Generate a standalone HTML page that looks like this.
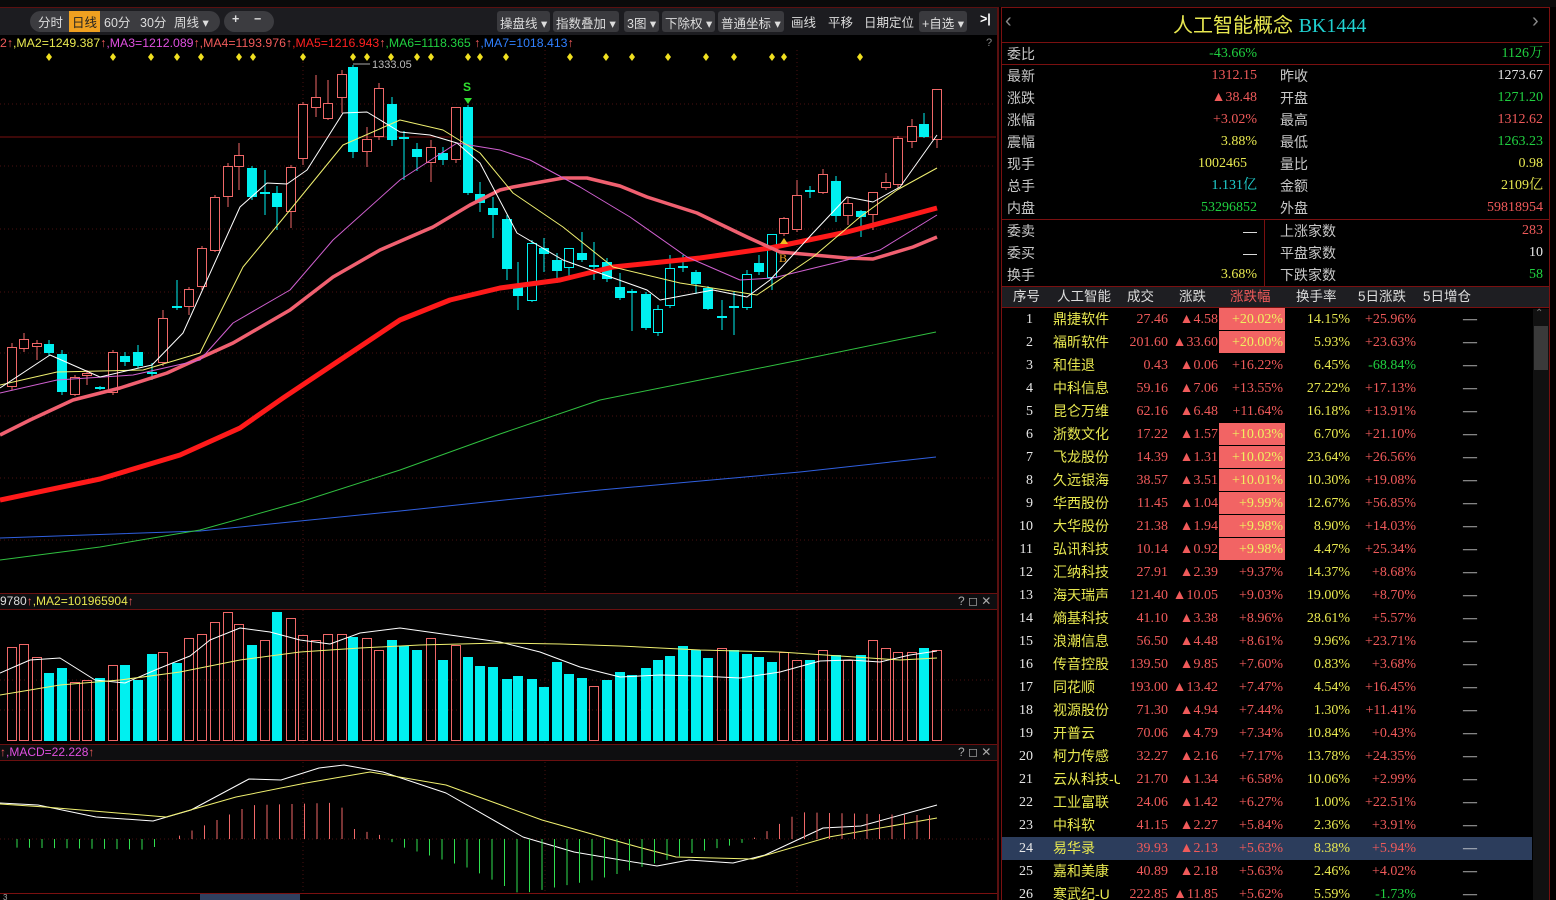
<!DOCTYPE html>
<html><head><meta charset="utf-8">
<style>
*{margin:0;padding:0;box-sizing:border-box}
html,body{width:1556px;height:900px;overflow:hidden}
body{background:#000;position:relative;font-family:"Liberation Sans","Noto Sans CJK SC",sans-serif;color:#ccc;font-size:13px}
.abs{position:absolute}
.tb{left:0;top:7px;width:998px;height:28px;background:#1c1c20;border-top:1px solid #5a1010}
.pill{position:absolute;top:3px;height:21px;background:#3c3c40;border-radius:11px}
.btn{position:absolute;top:4px;font-size:12.5px;color:#ddd;white-space:nowrap}
.bt2{position:absolute;top:3px;height:21px;background:#3a3a3e;border-radius:3px;font-size:12.5px;color:#ddd;padding:2px 3px;white-space:nowrap}
.ma{left:0;top:36px;font-size:12.3px;white-space:nowrap}
.hdr{left:0;width:997px;height:17px;background:#0e0e10;border-top:1px solid #6a1010;border-bottom:1px solid #6a1010;font-size:12px;line-height:15px;white-space:nowrap}
.rp{left:1001px;top:7px;width:549px;height:893px;border:1px solid #7a1010;border-bottom:none}
.ser{font-family:"Liberation Serif","Noto Serif CJK SC",serif}
.r{color:#f05a5a}.g{color:#20d040}.y{color:#e8e850}.c{color:#20d0d0}.w{color:#e8e8e8}.l{color:#c8c8c8}
.row{position:absolute;left:0;width:547px;height:22px;font-size:14px}
.row span{position:absolute;top:0;line-height:22px;white-space:nowrap}
.tr{position:absolute;left:0;width:530px;height:23px;font-size:14px}
.tr span{position:absolute;top:0;line-height:23px;white-space:nowrap}
</style></head><body>
<div class="abs" style="left:0;top:0;width:1556px;height:7px;background:#0a0a0a"></div>
<div class="abs tb">
 <div class="pill" style="left:30px;width:190px"></div>
 <div class="abs" style="left:69px;top:3px;width:31px;height:21px;background:#f0a020"></div>
 <span class="btn" style="left:38px">分时</span><span class="btn" style="left:72px;color:#222">日线</span><span class="btn" style="left:104px">60分</span><span class="btn" style="left:140px">30分</span><span class="btn" style="left:174px">周线 ▾</span>
 <div class="pill" style="left:224px;width:50px"></div>
 <span class="btn" style="left:232px;font-weight:bold">+</span><span class="btn" style="left:254px;font-weight:bold">−</span>
 <span class="bt2" style="left:497px">操盘线 ▾</span><span class="bt2" style="left:553px">指数叠加 ▾</span><span class="bt2" style="left:624px">3图 ▾</span><span class="bt2" style="left:662px">下除权 ▾</span><span class="bt2" style="left:718px">普通坐标 ▾</span>
 <span class="btn" style="left:791px">画线</span><span class="btn" style="left:828px">平移</span><span class="btn" style="left:864px">日期定位</span><span class="bt2" style="left:919px">+自选 ▾</span>
 <span class="btn" style="left:980px;font-weight:bold;color:#fff">&gt;|</span>
</div>
<div class="abs ma"><span class="r">2↑</span><span class="y">,MA2=1249.387</span><span class="r">↑</span><span style="color:#e050e0">,MA3=1212.089</span><span class="r">↑</span><span class="r">,MA4=1193.976↑</span><span style="color:#ff2020">,MA5=1216.943</span><span class="r">↑</span><span class="g">,MA6=1118.365</span><span class="r"> ↑</span><span style="color:#3080ff">,MA7=1018.413</span><span class="r">↑</span></div>
<span class="abs" style="left:986px;top:37px;font-size:11px;color:#888">?</span>
<svg class="abs" style="left:0;top:0" width="998" height="900" id="sv"></svg>
<div class="abs hdr" style="top:593px"><span style="color:#ddd">9780</span><span class="r">↑</span><span class="y">,MA2=101965904</span><span class="r">↑</span><span style="position:absolute;left:958px;color:#aaa">? ◻ ✕</span></div>
<div class="abs hdr" style="top:744px"><span class="r">↑</span><span style="color:#e050e0">,MACD=22.228</span><span class="r">↑</span><span style="position:absolute;left:958px;color:#aaa">? ◻ ✕</span></div>
<div class="abs" style="left:0;top:893px;width:998px;height:7px;border-top:1px solid #7a1010"></div>
<div class="abs" style="left:200px;top:894px;width:100px;height:6px;background:#304060"></div>
<div class="abs" style="left:997px;top:7px;width:2px;height:893px;background:#5a1010"></div>

<div class="abs rp">
 <div class="abs" style="left:0;top:0;width:547px;height:35px;border-bottom:1px solid #7a1010">
  <span class="abs" style="left:3px;top:2px;font-size:20px;color:#888">‹</span>
  <span class="abs" style="left:171px;top:1px;font-size:20px;color:#e8e850">人工智能概念 <span class="ser c">BK1444</span></span>
  <span class="abs" style="left:530px;top:2px;font-size:20px;color:#888">›</span>
 </div>
 <div class="row" style="top:35px;border-bottom:1px solid #7a1010"><span class="l" style="left:5px">委比</span><span class="ser g" style="right:292px">-43.66%</span><span class="ser g" style="right:6px">1126万</span></div>
 <div class="row" style="top:57px"><span class="l" style="left:5px">最新</span><span class="ser r" style="right:292px">1312.15</span><span class="l" style="left:278px">昨收</span><span class="ser w" style="right:6px">1273.67</span></div>
 <div class="row" style="top:79px"><span class="l" style="left:5px">涨跌</span><span class="ser r" style="right:292px">▲38.48</span><span class="l" style="left:278px">开盘</span><span class="ser g" style="right:6px">1271.20</span></div>
 <div class="row" style="top:101px"><span class="l" style="left:5px">涨幅</span><span class="ser r" style="right:292px">+3.02%</span><span class="l" style="left:278px">最高</span><span class="ser r" style="right:6px">1312.62</span></div>
 <div class="row" style="top:123px"><span class="l" style="left:5px">震幅</span><span class="ser y" style="right:292px">3.88%</span><span class="l" style="left:278px">最低</span><span class="ser g" style="right:6px">1263.23</span></div>
 <div class="row" style="top:145px"><span class="l" style="left:5px">现手</span><span class="ser y" style="right:302px">1002465</span><span class="l" style="left:278px">量比</span><span class="ser y" style="right:6px">0.98</span></div>
 <div class="row" style="top:167px"><span class="l" style="left:5px">总手</span><span class="ser c" style="right:292px">1.131亿</span><span class="l" style="left:278px">金额</span><span class="ser y" style="right:6px">2109亿</span></div>
 <div class="row" style="top:189px;border-bottom:1px solid #7a1010;height:23px"><span class="l" style="left:5px">内盘</span><span class="ser g" style="right:292px">53296852</span><span class="l" style="left:278px">外盘</span><span class="ser r" style="right:6px">59818954</span></div>
 <div class="abs" style="left:262px;top:212px;width:1px;height:66px;background:#7a1010"></div>
 <div class="row" style="top:212px"><span class="l" style="left:5px">委卖</span><span class="w" style="right:292px">—</span><span class="l" style="left:278px">上涨家数</span><span class="ser r" style="right:6px">283</span></div>
 <div class="row" style="top:234px"><span class="l" style="left:5px">委买</span><span class="w" style="right:292px">—</span><span class="l" style="left:278px">平盘家数</span><span class="ser w" style="right:6px">10</span></div>
 <div class="row" style="top:256px"><span class="l" style="left:5px">换手</span><span class="ser y" style="right:292px">3.68%</span><span class="l" style="left:278px">下跌家数</span><span class="ser g" style="right:6px">58</span></div>
 <div class="abs" style="left:0;top:278px;width:547px;height:22px;background:#1e1e22;border-top:1px solid #7a1010;border-bottom:1px solid #7a1010;font-size:13.5px;color:#ddd;line-height:20px">
  <span class="abs" style="left:11px;top:0">序号</span><span class="abs" style="left:55px;top:0">人工智能</span><span class="abs" style="left:125px;top:0">成交</span><span class="abs" style="left:177px;top:0">涨跌</span><span class="abs r" style="left:228px;top:0">涨跌幅</span><span class="abs" style="left:294px;top:0">换手率</span><span class="abs" style="left:356px;top:0">5日涨跌</span><span class="abs" style="left:421px;top:0">5日增仓</span>
 </div>
 <div class="abs" style="left:531px;top:301px;width:16px;height:592px;background:#111"></div>
 <div class="abs" style="left:532px;top:318px;width:14px;height:44px;background:#3a3a3a"></div>
 <span class="abs" style="left:533px;top:300px;font-size:10px;color:#777">⌃</span>
 <div id="tbl" class="abs" style="left:0;top:300px"></div>
</div>

<script>
var NS="http://www.w3.org/2000/svg",sv=document.getElementById('sv');
function el(t,a){var e=document.createElementNS(NS,t);for(var k in a)e.setAttribute(k,a[k]);sv.appendChild(e);return e}
[104,166,229,292,353,416,478,540].forEach(function(y){el('line',{x1:0,x2:996,y1:y,y2:y,stroke:'#4a1010','stroke-dasharray':'1 3'})});
[680,710].forEach(function(y){el('line',{x1:0,x2:996,y1:y,y2:y,stroke:'#4a1010','stroke-dasharray':'1 3'})});
[303,545,797].forEach(function(x){el('line',{x1:x,x2:x,y1:50,y2:893,stroke:'#4a1010','stroke-dasharray':'1 3'})});
el('line',{x1:0,x2:996,y1:137,y2:137,stroke:'#7a1010'});
el('line',{x1:0,x2:996,y1:839,y2:839,stroke:'#4a1010','stroke-dasharray':'1 3'});
[49,113,151,177,201,239,253,303,353,367,391,417,431,468,480,506,570,606,632,668,706,734,772,784,860].forEach(function(x){el('polygon',{points:(x)+',53 '+(x+3)+',57 '+x+',61 '+(x-3)+',57',fill:'#f0e020'})});
var C=[[12,347,387,343,390,'r'],[24,339,349,333,352,'r'],[37,343,347,340,360,'r'],[49,344,353,340,356,'c'],[62,354,392,350,395,'c'],[75,377,395,375,396,'r'],[87,373,376,370,385,'r'],[100,387,389,386,390,'c'],[113,352,393,350,395,'r'],[125,356,362,352,366,'c'],[138,352,366,345,368,'c'],[152,372,374,363,380,'d'],[163,318,363,310,366,'r'],[177,306,308,280,310,'d'],[189,289,307,287,315,'r'],[202,248,287,246,290,'r'],[215,197,251,195,252,'r'],[228,166,197,163,207,'r'],[239,155,167,143,190,'r'],[252,168,197,166,200,'c'],[265,192,196,170,215,'d'],[277,193,207,186,230,'c'],[291,167,212,165,228,'r'],[303,104,159,102,165,'r'],[316,97,108,75,117,'r'],[328,103,119,80,120,'r'],[342,74,98,70,113,'r'],[353,67,152,65,158,'c'],[367,139,152,127,167,'r'],[379,88,137,83,140,'r'],[392,104,140,97,146,'c'],[404,137,139,131,180,'d'],[417,149,157,143,171,'c'],[431,147,163,140,182,'r'],[443,153,160,147,165,'c'],[456,107,160,107,163,'r'],[468,107,193,105,195,'c'],[480,194,203,182,212,'c'],[493,208,215,197,238,'c'],[507,219,269,215,280,'c'],[518,286,296,262,310,'c'],[532,243,301,240,302,'o'],[544,248,254,238,272,'c'],[557,260,271,253,283,'c'],[569,248,268,248,278,'o'],[582,253,260,232,262,'c'],[594,265,267,242,280,'d'],[607,262,279,258,282,'c'],[620,287,298,273,300,'c'],[632,291,293,289,331,'d'],[646,294,328,292,330,'c'],[658,309,333,305,336,'o'],[670,268,306,255,308,'o'],[683,266,268,255,272,'d'],[696,272,284,270,294,'c'],[708,288,309,286,310,'c'],[722,316,318,300,330,'d'],[734,306,308,292,335,'c'],[747,274,308,270,310,'o'],[759,263,272,255,275,'c'],[772,234,278,234,290,'o'],[784,218,234,217,236,'r'],[797,195,230,180,232,'r'],[810,190,192,186,198,'d'],[823,174,193,169,194,'r'],[836,181,216,176,222,'c'],[848,203,216,197,225,'r'],[861,211,217,210,237,'c'],[873,192,215,192,230,'r'],[886,182,188,173,190,'r'],[898,138,185,136,188,'r'],[912,126,142,119,148,'r'],[924,124,137,113,138,'c'],[937,89,140,89,148,'r']];
C.forEach(function(k){var x=k[0],col=(k[5]=='r')?'#f06868':'#00f0f0';
 el('line',{x1:x,x2:x,y1:k[3],y2:k[4],stroke:col});
 if(k[5]=='d'){el('line',{x1:x-5,x2:x+5,y1:k[1]+1,y2:k[1]+1,stroke:col,'stroke-width':2})}
 else if(k[5]=='c'){el('rect',{x:x-5,y:k[1],width:10,height:Math.max(2,k[2]-k[1]),fill:col})}
 else{el('rect',{x:x-4.5,y:k[1]+.5,width:9,height:Math.max(2,k[2]-k[1]-1),fill:'#000',stroke:col})}
});
function pl(p,c,w){el('polyline',{points:p,fill:'none',stroke:c,'stroke-width':w||1,'stroke-linejoin':'round'})}
pl('0,538 200,531 400,511 600,490 800,472 936,457','#3060e0');
pl('0,560 100,547 200,530 300,502 400,470 500,434 600,400 700,380 800,360 936,332','#30c040');
pl('0,500 100,479 180,455 240,428 283,398 340,360 400,320 450,300 500,288 560,280 613,267 700,258 770,248 847,232 900,218 937,208','#ff1a1a',5);
pl('0,435 30,420 73,400 120,388 167,373 233,343 290,310 333,277 380,250 433,227 470,205 500,190 513,187 563,178 587,178 620,186 647,197 697,213 747,237 780,252 847,258 873,259 913,247 937,237','#f06070',3.5);
pl('0,393 57,380 133,375 200,360 233,323 290,290 333,240 400,180 457,143 500,150 530,160 580,187 630,217 687,257 740,280 773,278 847,260 880,250 937,215','#d060d0');
pl('0,385 57,372 143,370 200,353 243,267 290,210 343,145 400,120 443,130 480,153 513,193 563,227 613,267 680,283 757,295 813,257 860,217 897,190 937,168','#f0f070');
pl('0,388 50,355 100,377 152,365 183,333 240,207 267,183 287,184 307,170 343,113 367,112 400,132 430,135 457,143 480,163 517,233 563,260 647,290 660,300 713,290 747,297 770,280 813,233 847,197 873,202 900,187 937,135','#ffffff');
el('line',{x1:353,x2:370,y1:64,y2:64,stroke:'#aaa'});
var t=el('text',{x:372,y:68,fill:'#bbb','font-size':11,'font-family':'Liberation Sans'});t.textContent='1333.05';
t=el('text',{x:463,y:91,fill:'#30e030','font-size':12,'font-weight':'bold','font-family':'Liberation Sans'});t.textContent='S';
el('polygon',{points:'464,98 472,98 468,104',fill:'#30e030'});
el('polygon',{points:'780,244 788,244 784,238',fill:'#f0c020'});
t=el('text',{x:779,y:262,fill:'#f0a020','font-size':12,'font-family':'Liberation Serif'});t.textContent='B';
var V=[647,644,657,673,668,682,680,678,665,665,680,654,652,663,638,634,622,612,624,645,640,612,618,635,640,634,634,637,638,650,640,646,650,638,660,645,657,666,667,679,676,679,687,662,674,678,686,680,672,675,668,660,656,646,650,658,648,650,654,657,662,652,660,660,650,655,660,655,640,648,652,652,648,650,652];
C.forEach(function(k,i){var y=V[i]||655;
 if(k[5]=='c'||k[5]=='o'||(k[5]=='d'&&i%2))el('rect',{x:k[0]-5,y:y,width:10,height:741-y,fill:'#00f0f0'});
 else el('rect',{x:k[0]-4.5,y:y+.5,width:9,height:740-y,fill:'none',stroke:'#f06868'});});
pl('0,673 30,660 60,658 95,680 125,683 160,668 190,656 210,640 240,628 270,632 300,640 330,644 360,633 400,628 450,635 500,642 540,652 580,667 620,677 660,675 700,676 740,678 780,672 820,661 850,660 880,662 910,655 937,651','#fff');
pl('0,695 60,685 120,680 180,672 240,660 300,652 360,648 420,645 500,643 560,644 620,646 700,650 780,652 840,656 900,660 937,658','#f0f070');
pl('0,803 38,805 96,817 153,821 191,810 249,779 281,780 319,768 344,765 383,772 446,793 523,837 574,852 657,866 689,860 733,863 765,855 823,828 861,826 937,805','#fff');
pl('0,804 45,807 166,817 236,797 306,783 370,772 446,785 542,820 638,847 676,857 753,859 829,837 937,818','#f0f070');
var H=[[0,12],[150,14],[165,2],[175,-2],[250,-40],[340,-40],[350,-12],[385,-3],[395,6],[470,30],[520,55],[600,40],[690,15],[740,5],[760,-4],[800,-30],[937,-30]];
function hv(x){for(var j=0;j<H.length-1;j++){if(x>=H[j][0]&&x<=H[j+1][0]){var f=(x-H[j][0])/(H[j+1][0]-H[j][0]);return H[j][1]+f*(H[j+1][1]-H[j][1])}}return 0}
for(var x=17;x<=937;x+=12.5){var v=hv(x)*(0.85+0.15*Math.sin(x));if(Math.abs(v)<1)continue;el('line',{x1:x,x2:x,y1:839,y2:839+v,stroke:v<0?'#f06868':'#30e050'})}
var R=[["1","鼎捷软件","27.46","▲4.58","+20.02%","14.15%","+25.96%",1],["2","福昕软件","201.60","▲33.60","+20.00%","5.93%","+23.63%",1],["3","和佳退","0.43","▲0.06","+16.22%","6.45%","-68.84%",0],["4","中科信息","59.16","▲7.06","+13.55%","27.22%","+17.13%",0],["5","昆仑万维","62.16","▲6.48","+11.64%","16.18%","+13.91%",0],["6","浙数文化","17.22","▲1.57","+10.03%","6.70%","+21.10%",1],["7","飞龙股份","14.39","▲1.31","+10.02%","23.64%","+26.56%",1],["8","久远银海","38.57","▲3.51","+10.01%","10.30%","+19.08%",1],["9","华西股份","11.45","▲1.04","+9.99%","12.67%","+56.85%",1],["10","大华股份","21.38","▲1.94","+9.98%","8.90%","+14.03%",1],["11","弘讯科技","10.14","▲0.92","+9.98%","4.47%","+25.34%",1],["12","汇纳科技","27.91","▲2.39","+9.37%","14.37%","+8.68%",0],["13","海天瑞声","121.40","▲10.05","+9.03%","19.00%","+8.70%",0],["14","熵基科技","41.10","▲3.38","+8.96%","28.61%","+5.57%",0],["15","浪潮信息","56.50","▲4.48","+8.61%","9.96%","+23.71%",0],["16","传音控股","139.50","▲9.85","+7.60%","0.83%","+3.68%",0],["17","同花顺","193.00","▲13.42","+7.47%","4.54%","+16.45%",0],["18","视源股份","71.30","▲4.94","+7.44%","1.30%","+11.41%",0],["19","开普云","70.06","▲4.79","+7.34%","10.84%","+0.43%",0],["20","柯力传感","32.27","▲2.16","+7.17%","13.78%","+24.35%",0],["21","云从科技-U","21.70","▲1.34","+6.58%","10.06%","+2.99%",0],["22","工业富联","24.06","▲1.42","+6.27%","1.00%","+22.51%",0],["23","中科软","41.15","▲2.27","+5.84%","2.36%","+3.91%",0],["24","易华录","39.93","▲2.13","+5.63%","8.38%","+5.94%",0],["25","嘉和美康","40.89","▲2.18","+5.63%","2.46%","+4.02%",0],["26","寒武纪-U","222.85","▲11.85","+5.62%","5.59%","-1.73%",0]];
var h='';R.forEach(function(r,i){var top=i*23;
 h+='<div class="tr ser" style="top:'+top+'px;'+(i==23?'background:#2c3d5c;':'')+'">';
 if(r[7])h+='<div style="position:absolute;left:217px;top:0;width:66px;height:22px;background:#f26464"></div>';
 h+='<span class="w" style="right:'+(530-31)+'px">'+r[0]+'</span>';
 h+='<span class="y" style="left:51px;width:67px;overflow:hidden;font-family:\'Liberation Sans\',\'Noto Sans CJK SC\',sans-serif">'+r[1]+'</span>';
 h+='<span class="r" style="right:364px">'+r[2]+'</span>';
 h+='<span class="r" style="right:314px">'+r[3]+'</span>';
 h+='<span style="right:249px;color:'+(r[7]?'#f0f060':'#f05a5a')+'">'+r[4]+'</span>';
 h+='<span class="y" style="right:182px">'+r[5]+'</span>';
 h+='<span class="'+(r[6][0]=='-'?'g':'r')+'" style="right:116px">'+r[6]+'</span>';
 h+='<span class="w" style="left:461px">—</span></div>';});
document.getElementById('tbl').innerHTML=h;
</script>
<span class="abs" style="left:3px;top:893px;font-size:8px;color:#aaa">3</span>
</body></html>
